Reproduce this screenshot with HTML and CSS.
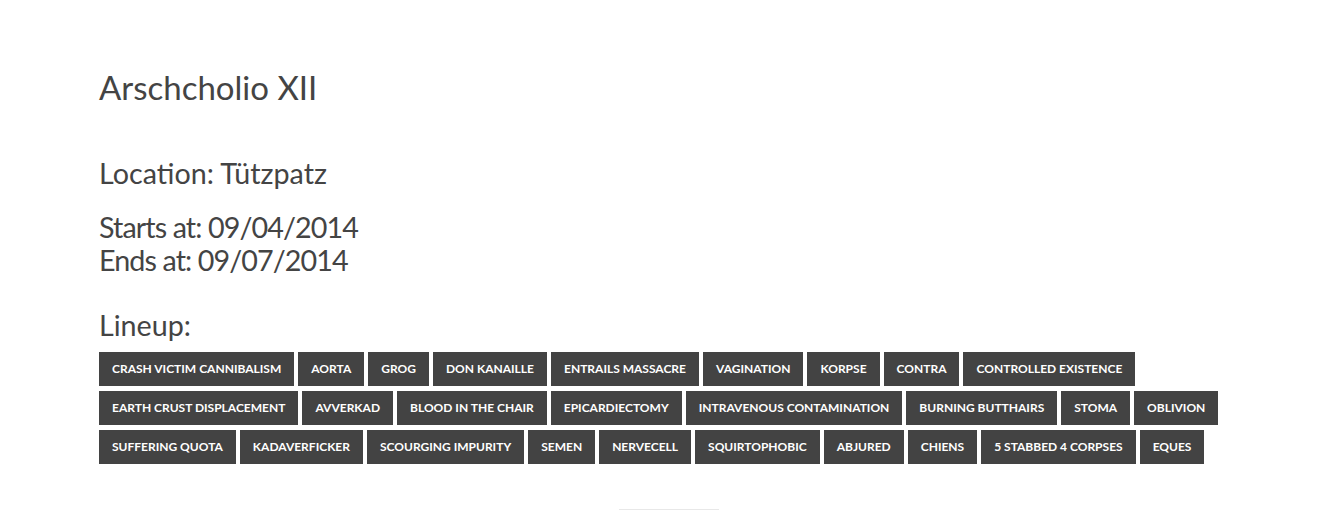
FILE: index.html
```html
<!DOCTYPE html>
<html>
<head>
<meta charset="utf-8">
<title>Arschcholio XII</title>
<link rel="stylesheet" href="styles.css">
</head>
<body>
<main class="page">
  <h1 class="title">Arschcholio XII</h1>
  <h2 class="info location">Location: Tützpatz</h2>
  <h2 class="info dates">Starts at: 09/04/2014<br>Ends at: 09/07/2014</h2>
  <h2 class="info lineup-title">Lineup:</h2>
  <div class="lineup">
    <a class="band">Crash Victim Cannibalism</a>
    <a class="band">Aorta</a>
    <a class="band">Grog</a>
    <a class="band">Don Kanaille</a>
    <a class="band">Entrails Massacre</a>
    <a class="band">Vagination</a>
    <a class="band">Korpse</a>
    <a class="band">Contra</a>
    <a class="band">Controlled Existence</a>
    <a class="band">Earth Crust Displacement</a>
    <a class="band">Avverkad</a>
    <a class="band">Blood in the Chair</a>
    <a class="band">Epicardiectomy</a>
    <a class="band">Intravenous Contamination</a>
    <a class="band">Burning Butthairs</a>
    <a class="band">Stoma</a>
    <a class="band">Oblivion</a>
    <a class="band">Suffering Quota</a>
    <a class="band">Kadaverficker</a>
    <a class="band">Scourging Impurity</a>
    <a class="band">Semen</a>
    <a class="band">Nervecell</a>
    <a class="band">Squirtophobic</a>
    <a class="band">Abjured</a>
    <a class="band">Chiens</a>
    <a class="band">5 Stabbed 4 Corpses</a>
    <a class="band">Eques</a>
  </div>
  <div class="footer-rule"></div>
</main>
</body>
</html>
```
FILE: styles.css
```css
html, body {
  margin: 0;
  padding: 0;
  background: #fff;
}
body {
  font-family: "Lato", "Open Sans", sans-serif;
  color: #444;
}
.page {
  padding: 67px 0 0 99px;
  width: 1200px;
}
.title {
  margin: 0;
  font-size: 33px;
  font-weight: 400;
  line-height: 40px;
}
.info {
  margin: 0;
  font-size: 28.7px;
  font-weight: 400;
  line-height: 33px;
}
.location { margin-top: 50px; }
.dates {
  margin-top: 21px;
  letter-spacing: -0.9px;
}
.lineup-title { margin-top: 32px; }
.lineup {
  margin-top: 10px;
  display: flex;
  flex-wrap: wrap;
  column-gap: 4px;
  row-gap: 5px;
}
.band {
  display: block;
  box-sizing: border-box;
  height: 34px;
  padding: 0 12px;
  border: 1px solid #434343;
  background: #434343;
  color: #fff;
  font-size: 12px;
  font-weight: 700;
  line-height: 32px;
  text-transform: uppercase;
  white-space: nowrap;
  cursor: pointer;
}
.footer-rule {
  margin: 45px 0 0 520px;
  width: 100px;
  height: 1px;
  background: #e8e8e8;
}
```
